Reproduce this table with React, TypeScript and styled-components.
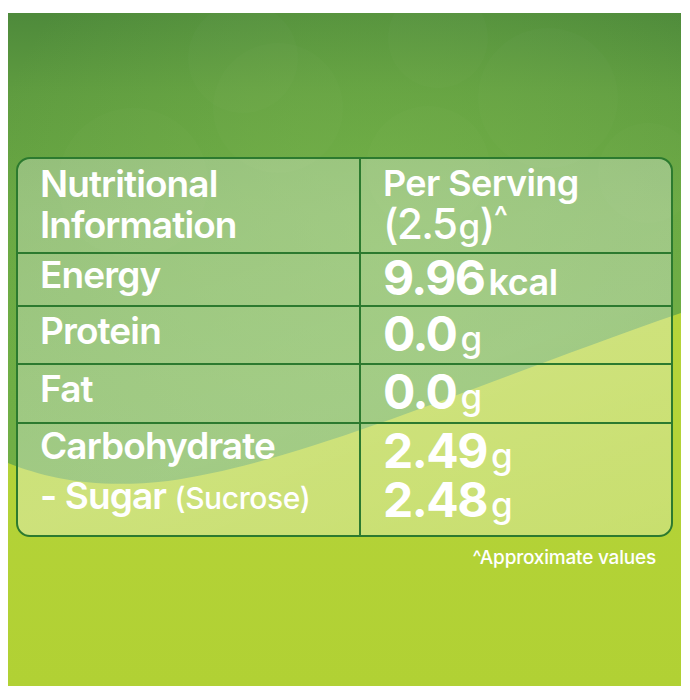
import React from 'react';
import styled, { createGlobalStyle } from 'styled-components';

const GlobalStyle = createGlobalStyle`
  body {
    margin: 0;
    background: #ffffff;
    font-family: Inter, "Liberation Sans", sans-serif;
  }
`;

const Page = styled.div`
  width: 690px;
  height: 700px;
  padding: 13px 9px 0 8px;
  box-sizing: border-box;
`;

const Panel = styled.div`
  position: relative;
  width: 673px;
  height: 673px;
  overflow: hidden;
  background: linear-gradient(180deg, #4e8a3b 0%, #5f9c40 12%, #6aa843 30%, #6fae45 55%, #74b046 100%);
`;

const Backdrop = styled.svg`
  position: absolute;
  inset: 0;
  width: 100%;
  height: 100%;
`;

const Content = styled.div`
  position: relative;
  padding: 144px 8px 0 8px;
  color: #ffffff;
`;

const Table = styled.div`
  display: grid;
  grid-template-columns: 341px 1fr;
  grid-template-rows: 95px 53px 58px 59px 111px;
  border: 2px solid #2c7a2f;
  border-radius: 14px;
  overflow: hidden;
  background: linear-gradient(160deg, rgba(255, 255, 255, 0.3) 0%, rgba(255, 255, 255, 0.34) 60%, rgba(255, 255, 255, 0.28) 100%);
`;

const Cell = styled.div<{ $right?: boolean; $last?: boolean; $top?: number }>`
  padding: ${p => p.$top ?? 0}px 0 0 22px;
  border-left: ${p => (p.$right ? '2px solid #2c7a2f' : 'none')};
  border-bottom: ${p => (p.$last ? 'none' : '2px solid #2c7a2f')};
  box-sizing: border-box;
`;

const Label = styled.div<{ $gap?: number }>`
  font-size: 37px;
  font-weight: 600;
  line-height: 41px;
  letter-spacing: -0.9px;
  margin-top: ${p => p.$gap ?? 0}px;
  white-space: nowrap;
`;

const SubLabel = styled.span`
  font-size: 30px;
  font-weight: 500;
  letter-spacing: -0.4px;
`;

const HeadValue = styled.div<{ $gap?: number }>`
  font-size: 36px;
  font-weight: 600;
  line-height: 40px;
  letter-spacing: -0.6px;
  white-space: nowrap;
  margin-top: ${p => p.$gap ?? 0}px;
`;

const Big = styled.span<{ $size?: number; $weight?: number }>`
  font-size: ${p => p.$size ?? 48}px;
  font-weight: ${p => p.$weight ?? 700};
  letter-spacing: -1.5px;
  line-height: 1;
`;

const Unit = styled.span<{ $bold?: boolean }>`
  font-size: ${p => (p.$bold ? 36 : 35)}px;
  font-weight: ${p => (p.$bold ? 600 : 500)};
  margin-left: 4px;
  letter-spacing: -0.5px;
  line-height: 1;
`;

const Caret = styled.span`
  font-size: 30px;
  font-weight: 500;
  line-height: 1;
  vertical-align: 12px;
`;

const Value = styled.div<{ $gap?: number }>`
  font-size: 48px;
  line-height: 48px;
  white-space: nowrap;
  margin-top: ${p => p.$gap ?? 0}px;
`;

const Note = styled.div`
  text-align: right;
  padding-right: 17px;
  margin-top: 9px;
  font-size: 19px;
  font-weight: 500;
  letter-spacing: -0.2px;
`;

const rows = [
  { label: 'Energy', value: '9.96', unit: 'kcal', top: 0 },
  { label: 'Protein', value: '0.0', unit: 'g', top: 3 },
  { label: 'Fat', value: '0.0', unit: 'g', top: 3 },
];

export default function App() {
  return (
    <>
      <GlobalStyle />
      <Page>
        <Panel>
          <Backdrop viewBox="0 0 673 673" preserveAspectRatio="none">
            <defs>
              <radialGradient id="glow" cx="0.55" cy="0.35" r="0.6">
                <stop offset="0" stopColor="#7dbb4c" stopOpacity="0.5" />
                <stop offset="1" stopColor="#7dbb4c" stopOpacity="0" />
              </radialGradient>
              <linearGradient id="lime" x1="0" y1="0" x2="0" y2="1">
                <stop offset="0" stopColor="#b6d43a" />
                <stop offset="1" stopColor="#b1d134" />
              </linearGradient>
            </defs>
            <rect x="0" y="0" width="673" height="673" fill="url(#glow)" />
            <g fill="#ffffff" fillOpacity="0.015">
              <circle cx="235" cy="45" r="55" />
              <circle cx="270" cy="95" r="65" />
              <circle cx="125" cy="170" r="75" />
              <circle cx="420" cy="155" r="62" />
              <circle cx="540" cy="85" r="70" />
              <circle cx="430" cy="25" r="50" />
              <circle cx="640" cy="160" r="50" />
            </g>
            <path
              d="M0 450 C 40 466, 90 476, 160 468 C 300 448, 470 370, 673 300 L673 673 L0 673 Z"
              fill="url(#lime)"
            />
          </Backdrop>
          <Content>
            <Table>
              <Cell $top={4}>
                <Label>Nutritional<br />Information</Label>
              </Cell>
              <Cell $right $top={4}>
                <HeadValue>Per Serving</HeadValue>
                <HeadValue $gap={-2}>
                  <Big $size={42} $weight={500}>(2.5</Big>
                  <Unit style={{ marginLeft: 2 }}>g</Unit>
                  <Big $size={42} $weight={500}>)</Big>
                  <Caret>^</Caret>
                </HeadValue>
              </Cell>
              {rows.map(r => (
                <React.Fragment key={r.label}>
                  <Cell $top={r.top}>
                    <Label>{r.label}</Label>
                  </Cell>
                  <Cell $right $top={r.top}>
                    <Value>
                      <Big>{r.value}</Big>
                      <Unit $bold={r.unit === 'kcal'}>{r.unit}</Unit>
                    </Value>
                  </Cell>
                </React.Fragment>
              ))}
              <Cell $last $top={1}>
                <Label>Carbohydrate</Label>
                <Label $gap={9}>
                  - Sugar <SubLabel>(Sucrose)</SubLabel>
                </Label>
              </Cell>
              <Cell $right $last $top={3}>
                <Value>
                  <Big>2.49</Big>
                  <Unit>g</Unit>
                </Value>
                <Value $gap={1}>
                  <Big>2.48</Big>
                  <Unit>g</Unit>
                </Value>
              </Cell>
            </Table>
            <Note>^Approximate values</Note>
          </Content>
        </Panel>
      </Page>
    </>
  );
}
